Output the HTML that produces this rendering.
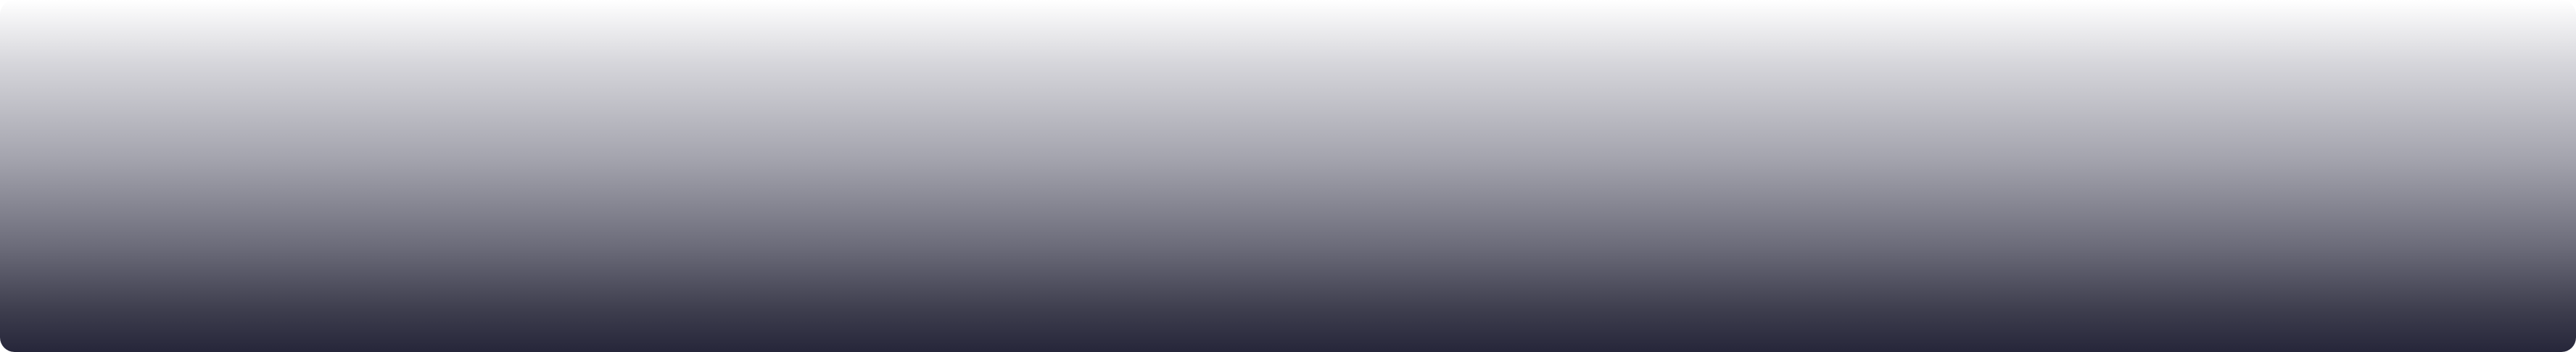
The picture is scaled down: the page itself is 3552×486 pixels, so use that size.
<!DOCTYPE html>
<html><head><meta charset="utf-8"><style>
html,body{margin:0;padding:0;background:#fff;}
body{width:3552px;height:486px;overflow:hidden;}
.g{width:3552px;height:486px;border-radius:20px;background:linear-gradient(to bottom,#ffffff 0%,#d6d6db 18%,#a4a4ae 45%,#6c6c7a 70%,#3e3e4e 88%,#26263a 100%);}
</style></head><body><div class="g"></div></body></html>
